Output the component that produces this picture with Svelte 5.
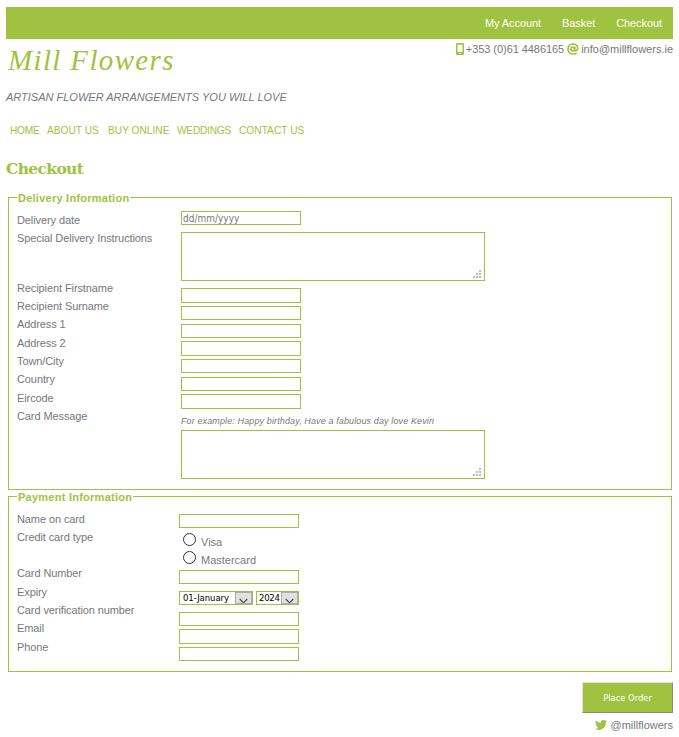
<script>
  const account = ['My Account', 'Basket', 'Checkout'];
  const nav = [
    { text: 'HOME', width: 37 },
    { text: 'ABOUT US', width: 61 },
    { text: 'BUY ONLINE', width: 69 },
    { text: 'WEDDINGS', width: 62 },
    { text: 'CONTACT US', width: 70 }
  ];

  // height is the row pitch of the label column
  const deliveryLabels = [
    { text: 'Delivery date', height: 18 },
    { text: 'Special Delivery Instructions', height: 50 },
    { text: 'Recipient Firstname', height: 18 },
    { text: 'Recipient Surname', height: 18 },
    { text: 'Address 1', height: 19 },
    { text: 'Address 2', height: 18 },
    { text: 'Town/City', height: 18 },
    { text: 'Country', height: 19 },
    { text: 'Eircode', height: 18 },
    { text: 'Card Message', height: 18 }
  ];
  // height of the box and the gap that follows it
  const addressFields = [
    { name: 'firstname', height: 15, gap: 3 },
    { name: 'surname', height: 14, gap: 4 },
    { name: 'address1', height: 14, gap: 3 },
    { name: 'address2', height: 15, gap: 3 },
    { name: 'town', height: 14, gap: 4 },
    { name: 'country', height: 14, gap: 3 },
    { name: 'eircode', height: 15, gap: 0 }
  ];
  const paymentLabels = [
    { text: 'Name on card', height: 18 },
    { text: 'Credit card type', height: 36 },
    { text: 'Card Number', height: 19 },
    { text: 'Expiry', height: 18 },
    { text: 'Card verification number', height: 18 },
    { text: 'Email', height: 19 },
    { text: 'Phone', height: 18 }
  ];
  const contactFields = [
    { name: 'cvn', height: 14, gap: 3 },
    { name: 'email', height: 15, gap: 3 },
    { name: 'phone', height: 14, gap: 0 }
  ];
</script>

{#snippet labels(items)}
  <div class="labels">
    {#each items as item}
      <div class="label" style="height: {item.height}px">{item.text}</div>
    {/each}
  </div>
{/snippet}

{#snippet textbox(name)}
  <div class="area">
    <textarea {name} aria-label={name}></textarea>
    <svg class="grip" width="8" height="8" fill="#bdbdbd">
      <path d="M6 0h2v2H6zM3 3h2v2H3zM6 3h2v2H6zM0 6h2v2H0zM3 6h2v2H3zM6 6h2v2H6z" />
    </svg>
  </div>
{/snippet}

{#snippet picker(value, cls)}
  <div class="picker {cls}">
    <select aria-label={cls}><option>{value}</option></select>
    <span class="arrow"
      ><svg width="16" height="11" fill="none" stroke="#444" stroke-width="1.1"><path d="M3.700 6 7.500 9.800 11.300 6" /></svg></span
    >
  </div>
{/snippet}

<div class="page">
  <div class="topbar">
    {#each account as link}<a href="#top">{link}</a>{/each}
  </div>

  <header>
    <div class="logo">Mill Flowers</div>
    <div class="contact">
      <svg width="8" height="12" viewBox="0 0 8 12"
        ><path fill="#9fc340" fill-rule="evenodd" d="M1.3 0h5.4Q8 0 8 1.3v9.4Q8 12 6.700 12H1.300Q0 12 0 10.700V1.300Q0 0 1.300 0zM1.500 1.800v7h5v-7zM3.300 9.900v1h1.400v-1z" /></svg
      >
      <span class="phone">+353 (0)61 4486165</span>
      <svg class="at" width="12" height="12" viewBox="0 0 12 12" fill="none" stroke="#9fc340" stroke-width="1.7"
        ><circle cx="5.600" cy="5.900" r="1.900" /><path d="M8 3.600 7.500 7.200Q8 8.300 9.300 7.600 11 6.500 10.800 4.800 10.200 1 6 1 1 1.200 1 6 1.200 11 6 11 8.300 11 9.700 10" /></svg
      >
      <span>info@millflowers.ie</span>
    </div>
  </header>

  <div class="tagline">ARTISAN FLOWER ARRANGEMENTS YOU WILL LOVE</div>

  <nav>
    {#each nav as item}<a href="#top" style="width: {item.width}px">{item.text}</a>{/each}
  </nav>

  <h1>Checkout</h1>

  <section class="box delivery">
    <h2>Delivery Information</h2>
    {@render labels(deliveryLabels)}
    <div class="fields">
      <input class="date" placeholder="dd/mm/yyyy" aria-label="Delivery date" />
      {@render textbox('instructions')}
      {#each addressFields as f}
        <input name={f.name} aria-label={f.name} style="height: {f.height}px; margin-bottom: {f.gap}px" />
      {/each}
      <div class="hint">For example: Happy birthday, Have a fabulous day love Kevin</div>
      {@render textbox('message')}
    </div>
  </section>

  <section class="box payment">
    <h2>Payment Information</h2>
    {@render labels(paymentLabels)}
    <div class="fields">
      <input aria-label="Name on card" />
      <div class="radios">
        <label><input type="radio" name="card" /><span>Visa</span></label>
        <label><input type="radio" name="card" /><span>Mastercard</span></label>
      </div>
      <input aria-label="Card Number" />
      <div class="expiry">
        {@render picker('01-January', 'month')}
        {@render picker('2024', 'year')}
      </div>
      {#each contactFields as f}
        <input name={f.name} aria-label={f.name} style="height: {f.height}px; margin-bottom: {f.gap}px" />
      {/each}
    </div>
  </section>

  <button>Place Order</button>

  <footer>
    <svg width="12" height="10" viewBox="0 0 24 20"
      ><path fill="#9fc340" d="M24 2.400a10 10 0 0 1-2.800.8A5 5 0 0 0 23.300.5a10 10 0 0 1-3.100 1.200 4.900 4.900 0 0 0-8.400 4.500A14 14 0 0 1 1.700 1a4.900 4.900 0 0 0 1.500 6.600 5 5 0 0 1-2.200-.6 4.900 4.900 0 0 0 3.900 4.900 5 5 0 0 1-2.200.1 4.900 4.900 0 0 0 4.600 3.400A9.900 9.900 0 0 1 0 17.500 14 14 0 0 0 21.500 5 10 10 0 0 0 24 2.400z" /></svg
    >
    <span>@millflowers</span>
  </footer>
</div>

<style>
  :global(body) {
    background: #fff;
  }
  .page {
    box-sizing: border-box;
    width: 679px;
    height: 737px;
    padding: 7px 6px 0;
    overflow: hidden;
    display: flex;
    flex-direction: column;
    font: 11px/14px 'Liberation Sans', Arial, sans-serif;
    color: #77787b;
  }
  a {
    text-decoration: none;
  }
  .topbar {
    height: 32px;
    display: flex;
    justify-content: flex-end;
    align-items: center;
    gap: 21px;
    background: #9fc340;
    padding-right: 11px;
  }
  .topbar a {
    color: #fff;
    letter-spacing: -0.08px;
  }
  header {
    display: flex;
    justify-content: space-between;
    height: 48px;
  }
  .logo {
    font: italic 29px/42px 'Liberation Serif', 'Times New Roman', serif;
    letter-spacing: 1.35px;
    color: #9fc340;
    padding-left: 2px;
  }
  .contact {
    display: flex;
    align-items: center;
    height: 20px;
    white-space: nowrap;
  }
  .phone {
    margin: 0 3px 0 2px;
    letter-spacing: -0.06px;
  }
  .at {
    margin-right: 2px;
  }
  .tagline {
    height: 33px;
    line-height: 20px;
    font-style: italic;
  }
  nav {
    display: flex;
    height: 20px;
    line-height: 21px;
    padding-left: 4px;
    font-size: 10.2px;
  }
  nav a {
    color: #9fc340;
    white-space: nowrap;
  }
  nav a:first-child,
  nav a:nth-child(4) {
    letter-spacing: -0.25px;
  }
  h1 {
    margin: 18px 0 0;
    height: 39px;
    font: bold 15.5px/22px 'DejaVu Serif', Georgia, serif;
    letter-spacing: -0.65px;
    color: #9fc340;
  }
  .box {
    box-sizing: border-box;
    flex: none;
    margin: 0 1px 0 2px;
    width: 664px;
    border: 1px solid #9fc340;
    display: grid;
    grid-template-columns: 164px auto;
    grid-template-rows: 0 auto;
    padding-left: 8px;
  }
  .delivery {
    height: 293px;
    margin-bottom: 6px;
  }
  .payment {
    height: 176px;
    grid-template-columns: 162px auto;
  }
  h2 {
    grid-column: 1 / 3;
    justify-self: start;
    margin: -7px 0 0 0;
    padding: 0 1px;
    height: 14px;
    font-size: 11px;
    line-height: 15px;
    letter-spacing: 0.25px;
    background: #fff;
    color: #9fc340;
  }
  .labels {
    padding-top: 15px;
    letter-spacing: -0.1px;
  }
  .fields {
    display: flex;
    flex-direction: column;
    align-items: flex-start;
    padding-top: 13px;
  }
  .payment .fields {
    padding-top: 17px;
  }
  input:not([type='radio']) {
    box-sizing: border-box;
    flex: none;
    width: 120px;
    height: 14px;
    margin: 0;
    padding: 0 1px;
    border: 1px solid #9fc340;
    background: #fff;
    font: 10px/12px 'DejaVu Sans Condensed', 'DejaVu Sans', sans-serif;
  }
  .date::placeholder {
    color: #777;
    opacity: 1;
  }
  .area {
    position: relative;
    width: 304px;
    height: 49px;
  }
  .date + .area {
    margin: 7px 0;
  }
  textarea {
    display: block;
    box-sizing: border-box;
    width: 304px;
    height: 49px;
    border: 1px solid #9fc340;
    resize: none;
  }
  .grip {
    position: absolute;
    right: 4px;
    bottom: 3px;
  }
  .hint {
    height: 21px;
    line-height: 24px;
    font-size: 9px;
    font-style: italic;
    letter-spacing: 0.12px;
  }
  .radios {
    height: 42px;
    padding-top: 3px;
    box-sizing: border-box;
  }
  .radios label {
    display: flex;
    height: 18px;
    padding-left: 4px;
  }
  .radios input {
    appearance: none;
    box-sizing: border-box;
    width: 13px;
    height: 13px;
    margin: 2px 5px 0 0;
    border: 1.2px solid #333;
    border-radius: 50%;
  }
  .radios span {
    line-height: 22px;
  }
  .expiry {
    display: flex;
    gap: 3px;
    margin: 7px 0;
  }
  .picker {
    box-sizing: border-box;
    display: flex;
    width: 74px;
    height: 14px;
    border: 1px solid #9fc340;
  }
  .year {
    width: 43px;
  }
  .picker select {
    appearance: none;
    flex: 1;
    min-width: 0;
    height: 12px;
    padding: 0 0 0 3px;
    border: 0;
    background: #fff;
    color: #000;
    font: 9.5px/12px 'DejaVu Sans Condensed', 'DejaVu Sans', sans-serif;
    letter-spacing: -0.1px;
  }
  .year select {
    padding-left: 2px;
    letter-spacing: -0.3px;
  }
  .arrow {
    flex: none;
    box-sizing: border-box;
    width: 17px;
    height: 12px;
    border: 1px solid #adadad;
    background: #e1e1e1;
    overflow: hidden;
  }
  .arrow svg {
    display: block;
  }
  button {
    box-sizing: border-box;
    flex: none;
    align-self: flex-end;
    width: 91px;
    height: 31px;
    margin-top: 10px;
    padding: 0;
    border: 1px solid;
    border-color: #e3e3e3 #8a8a8a #8a8a8a #e3e3e3;
    background: #9fc340;
    color: #fff;
    font: 9.5px 'DejaVu Sans Condensed', 'DejaVu Sans', sans-serif;
    letter-spacing: -0.1px;
  }
  footer {
    display: flex;
    justify-content: flex-end;
    align-items: center;
    gap: 3px;
    height: 24px;
  }
</style>
